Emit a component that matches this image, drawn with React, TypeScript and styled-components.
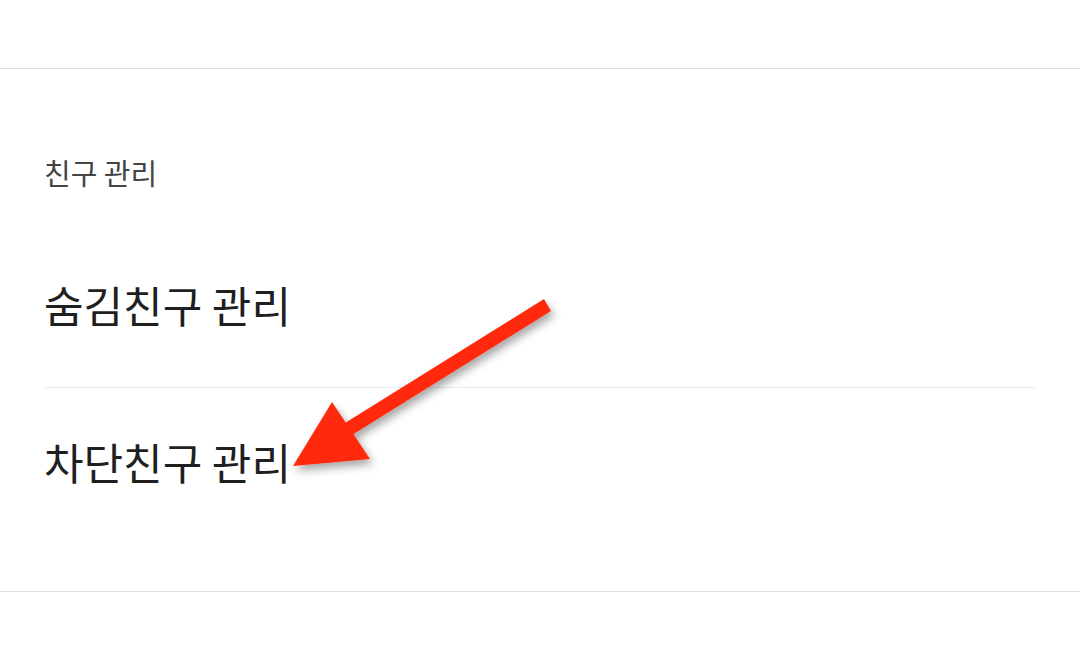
import styled, { createGlobalStyle } from 'styled-components'

const GlobalStyle = createGlobalStyle`
  html, body {
    margin: 0;
    padding: 0;
    background: #ffffff;
  }
  body {
    font-family: "Noto Sans CJK KR", "Noto Sans", sans-serif;
  }
  *, *::before, *::after {
    box-sizing: border-box;
  }
`

const Page = styled.div`
  position: relative;
  width: 1080px;
  height: 656px;
  overflow: hidden;
  background: #ffffff;
`

const TopBar = styled.div`
  height: 69px;
  border-bottom: 1px solid #dedede;
`

const Section = styled.section`
  padding: 83px 44px 0 44px;
  height: 523px;
  border-bottom: 1px solid #dedede;
`

const SectionTitle = styled.h2`
  margin: 0;
  font-size: 29px;
  font-weight: 400;
  line-height: 40px;
  color: #454545;
`

const List = styled.ul`
  list-style: none;
  margin: 29px 0 0 0;
  padding: 0;
  width: 992px;
`

const Item = styled.li<{ $divider?: boolean }>`
  height: ${({ $divider }) => ($divider ? '147px' : '166px')};
  display: flex;
  align-items: center;
  font-size: 43px;
  line-height: 1;
  color: #1f1f1f;
  border-top: ${({ $divider }) => ($divider ? '1px solid #ececec' : 'none')};
`

const Arrow = styled.svg`
  position: absolute;
  left: 0;
  top: 0;
  pointer-events: none;
`

function App() {
  return (
    <Page>
      <GlobalStyle />
      <TopBar />
      <Section>
        <SectionTitle>친구 관리</SectionTitle>
        <List>
          <Item>숨김친구 관리</Item>
          <Item $divider>차단친구 관리</Item>
        </List>
      </Section>
      <Arrow width="1080" height="656" viewBox="0 0 1080 656">
        <defs>
          <filter id="shadow" x="-20%" y="-20%" width="140%" height="140%">
            <feDropShadow dx="3" dy="5" stdDeviation="4" floodColor="#000" floodOpacity="0.35" />
          </filter>
        </defs>
        <g filter="url(#shadow)" fill="#ff2a0a">
          <polygon points="544,299 551,311 352,435 345,423" />
          <polygon points="332,402 370,459 293,466" />
        </g>
      </Arrow>
    </Page>
  )
}

export default App
